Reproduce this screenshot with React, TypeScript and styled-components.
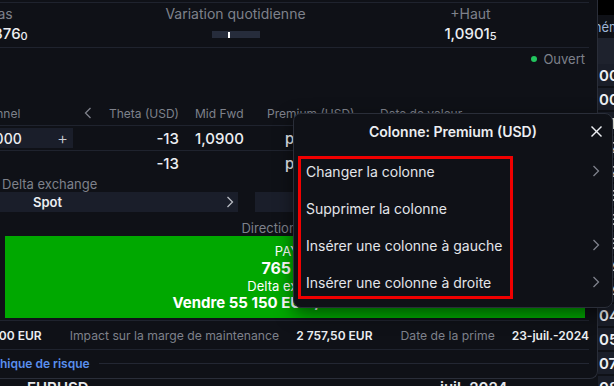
import React from "react";
import styled, { createGlobalStyle } from "styled-components";

const Global = createGlobalStyle`
  html, body { margin: 0; padding: 0; background: #0f1117; }
  body { font-family: Inter, "Noto Sans", sans-serif; }
  * { box-sizing: border-box; }
`;

const Screen = styled.div`
  position: relative;
  width: 614px;
  height: 386px;
  overflow: hidden;
  background: #0f1117;
  color: #e6e8ec;
  font-family: Inter, "Noto Sans", sans-serif;
`;

/* ---------- background page (behind the panel) ---------- */
const BgPage = styled.div`
  display: flex;
  flex-direction: column;
`;
const BgTopBar = styled.div`
  height: 15px;
  background: #000;
`;
const BgToolbar = styled.div`
  height: 23px;
  display: flex;
  align-items: center;
  padding-left: 578px;
  font-size: 13px;
  color: #9fb6d6;
  white-space: nowrap;
`;
const BgHeader = styled.div`
  height: 26px;
  background: #1e222d;
`;
const BgRow = styled.div`
  height: 24px;
  display: grid;
  grid-template-columns: 413px 158px 1fr;
  padding-left: 27px;
  align-items: center;
  border-bottom: 2px solid #0f1117;
  font-size: 15px;
  font-weight: 600;
  white-space: nowrap;
`;
const BgValue = styled.div`
  height: 100%;
  display: flex;
  align-items: center;
  padding-left: 1px;
  background: #1a1e29;
  color: #eef0f3;
`;

/* ---------- main panel ---------- */
const Panel = styled.div`
  position: absolute;
  left: 0;
  top: 0;
  width: 598px;
  height: 379px;
  background: #0f1117;
  border-right: 1px solid #2a2e39;
  border-bottom: 1px solid #2a2e39;
  border-bottom-right-radius: 8px;
  padding-right: 8px;
  overflow: hidden;
  display: flex;
  flex-direction: column;
`;

const StatsSection = styled.div`
  margin-top: 2px;
  border-top: 1px solid #1f232e;
  border-bottom: 1px solid #1f232e;
  padding: 1px 0 3px;
`;
const StatsGrid = styled.div`
  display: grid;
  grid-template-columns: repeat(3, 235px);
  margin-left: -117px;
`;
const Stat = styled.div`
  display: flex;
  flex-direction: column;
  align-items: center;
  white-space: nowrap;
`;
const StatLabel = styled.div`
  font-size: 14px;
  line-height: 20px;
  color: #7e818b;
`;
const StatValue = styled.div`
  font-size: 15px;
  line-height: 20px;
  font-weight: 500;
  color: #eceef2;
  height: 20px;
  display: flex;
  align-items: center;
`;
const Small = styled.span`
  font-size: 11px;
  margin-top: 3px;
`;
const RangeBar = styled.div`
  position: relative;
  width: 48px;
  height: 7px;
  background: #262c3b;
`;
const RangeTick = styled.div`
  position: absolute;
  left: 16px;
  top: 1px;
  width: 2px;
  height: 6px;
  background: #fff;
`;

const StatusRow = styled.div`
  height: 22px;
  display: flex;
  align-items: center;
  justify-content: flex-end;
  gap: 6px;
  padding-right: 4px;
  font-size: 13px;
  color: #7e818b;
`;
const Dot = styled.span`
  width: 6px;
  height: 6px;
  border-radius: 50%;
  background: #22c55e;
`;

const Table = styled.div`
  margin-top: 31px;
  margin-left: -34px;
  display: flex;
  flex-direction: column;
`;
const TRow = styled.div<{ $head?: boolean; $line?: boolean }>`
  display: grid;
  grid-template-columns: 107px 30px 76px 88px 113px 160px;
  height: ${(p) => (p.$line ? 25 : 24)}px;
  align-items: center;
  border-bottom: ${(p) => (p.$line ? "1px solid #1f232e" : "none")};
  font-size: ${(p) => (p.$head ? 12 : 15)}px;
  font-weight: ${(p) => (p.$head ? 400 : 500)};
  color: ${(p) => (p.$head ? "#7e818b" : "#eceef2")};
  white-space: nowrap;
`;
const Cell = styled.div<{ $align?: string; $pl?: number }>`
  padding-left: ${(p) => p.$pl || 0}px;
  display: flex;
  justify-content: ${(p) =>
    p.$align === "right" ? "flex-end" : p.$align === "center" ? "center" : "flex-start"};
  align-items: center;
  overflow: hidden;
`;
const NumInput = styled.div`
  width: 107px;
  height: 20px;
  background: #1a1e2a;
  display: flex;
  align-items: center;
  justify-content: space-between;
  padding: 0 5px 0 1px;
  font-size: 14px;
`;
const Plus = styled.span`
  font-size: 17px;
  font-weight: 300;
  color: #c9ccd3;
`;

const DeltaGrid = styled.div`
  display: grid;
  grid-template-columns: 238px 238px;
  column-gap: 17px;
`;
const Field = styled.div`
  display: flex;
  flex-direction: column;
`;
const FieldLabel = styled.div`
  height: 17px;
  font-size: 13px;
  line-height: 19px;
  color: #7e818b;
  padding-left: 2px;
  white-space: nowrap;
`;
const SelectBox = styled.div<{ $center?: boolean }>`
  height: 20px;
  background: #1a1e2a;
  display: flex;
  align-items: center;
  justify-content: ${(p) => (p.$center ? "center" : "space-between")};
  padding: 0 4px 0 33px;
  font-size: 13px;
  font-weight: 600;
  color: #eceef2;
`;

const DirectionLabel = styled.div`
  margin-top: 8px;
  height: 16px;
  line-height: 16px;
  text-align: center;
  font-size: 13px;
  color: #7e818b;
  padding-left: 4px;
`;
const GreenBlock = styled.div`
  height: 82px;
  margin: 0 4px 0 5px;
  background: #00a800;
  color: #fff;
  display: flex;
  flex-direction: column;
  align-items: center;
  justify-content: center;
  white-space: nowrap;
`;
const GLine = styled.div<{ $size: number; $bold?: boolean; $lh: number }>`
  font-size: ${(p) => p.$size}px;
  line-height: ${(p) => p.$lh}px;
  font-weight: ${(p) => (p.$bold ? 700 : 400)};
`;

const InfoRow = styled.div`
  margin-top: 2px;
  height: 30px;
  border-top: 1px solid #1f232e;
  border-bottom: 1px solid #1f232e;
  display: flex;
  justify-content: flex-end;
  align-items: center;
  gap: 28px;
  white-space: nowrap;
`;
const Pair = styled.div`
  display: flex;
  align-items: baseline;
  gap: 17px;
  flex-shrink: 0;
`;
const PLabel = styled.span`
  color: #7e818b;
  font-size: 12.2px;
`;
const PValue = styled.span`
  color: #eceef2;
  font-weight: 600;
  font-size: 12px;
`;

const RiskRow = styled.div`
  height: 26px;
  display: flex;
  align-items: center;
  gap: 9px;
  margin-left: -28px;
`;
const RiskLink = styled.span`
  color: #5a8fee;
  font-size: 12px;
  font-weight: 600;
  white-space: nowrap;
`;
const RiskLine = styled.div`
  flex: 1;
  height: 1px;
  background: #232733;
`;

/* ---------- column popup ---------- */
const Popup = styled.div`
  position: absolute;
  left: 293px;
  top: 113px;
  width: 320px;
  height: 195px;
  background: #0f1117;
  border: 1px solid #2a2e39;
  border-radius: 8px;
  box-shadow: 0 6px 18px rgba(0, 0, 0, 0.5);
`;
const PopupHeader = styled.div`
  height: 34px;
  display: grid;
  grid-template-columns: 40px 1fr 40px;
  align-items: center;
`;
const PopupTitle = styled.div`
  text-align: center;
  font-size: 14px;
  font-weight: 600;
  color: #eceef2;
  white-space: nowrap;
`;
const CloseBtn = styled.div`
  justify-self: end;
  padding-right: 10px;
  display: flex;
  align-items: center;
`;
const MenuList = styled.div`
  padding-top: 4.5px;
  display: flex;
  flex-direction: column;
`;
const MenuItem = styled.div`
  height: 37px;
  display: flex;
  align-items: center;
  justify-content: space-between;
  padding: 0 12px 0 12px;
  font-size: 14px;
  color: #e3e5ea;
  white-space: nowrap;
`;
const Highlight = styled.div`
  position: absolute;
  left: 4px;
  top: 42px;
  width: 215px;
  height: 143px;
  border: 3px solid #f00000;
  pointer-events: none;
`;

const Chevron = ({ dir = "right", color = "#7e818b" }: { dir?: "left" | "right"; color?: string }) => (
  <svg width="8" height="12" viewBox="0 0 8 12" fill="none">
    <polyline
      points={dir === "right" ? "1.5,1 6.5,6 1.5,11" : "6.5,1 1.5,6 6.5,11"}
      stroke={color}
      strokeWidth="1.3"
      fill="none"
    />
  </svg>
);

const CloseIcon = () => (
  <svg width="11" height="11" viewBox="0 0 11 11">
    <line x1="0.5" y1="0.5" x2="10.5" y2="10.5" stroke="#eceef2" strokeWidth="1.4" />
    <line x1="10.5" y1="0.5" x2="0.5" y2="10.5" stroke="#eceef2" strokeWidth="1.4" />
  </svg>
);

const bgRows = ["00", "00", "01", "02", "02", "03", "03", "03", "04", "04", "04", "05", "07", "08"];

export default function App() {
  return (
    <Screen>
      <Global />
      <BgPage>
        <BgTopBar />
        <BgToolbar>Schéma</BgToolbar>
        <BgHeader />
        {bgRows.map((v, i) => (
          <BgRow key={i}>
            <span>EURUSD</span>
            <span>juil. 2024</span>
            <BgValue>{v},5</BgValue>
          </BgRow>
        ))}
      </BgPage>

      <Panel>
        <StatsSection>
          <StatsGrid>
            <Stat>
              <StatLabel>Bas</StatLabel>
              <StatValue>
                1,0876<Small>0</Small>
              </StatValue>
            </Stat>
            <Stat>
              <StatLabel>Variation quotidienne</StatLabel>
              <StatValue>
                <RangeBar>
                  <RangeTick />
                </RangeBar>
              </StatValue>
            </Stat>
            <Stat>
              <StatLabel>+Haut</StatLabel>
              <StatValue>
                1,0901<Small>5</Small>
              </StatValue>
            </Stat>
          </StatsGrid>
        </StatsSection>

        <StatusRow>
          <Dot />
          Ouvert
        </StatusRow>

        <Table>
          <TRow $head $line>
            <Cell>Notionnel</Cell>
            <Cell $align="center">
              <Chevron dir="left" />
            </Cell>
            <Cell $align="right">Theta (USD)</Cell>
            <Cell $pl={16}>Mid Fwd</Cell>
            <Cell>Premium (USD)</Cell>
            <Cell>Date de valeur</Cell>
          </TRow>
          <TRow $line>
            <Cell>
              <NumInput>
                100 000
                <Plus>+</Plus>
              </NumInput>
            </Cell>
            <Cell />
            <Cell $align="right">-13</Cell>
            <Cell $pl={16}>1,0900</Cell>
            <Cell $pl={18}>payé</Cell>
            <Cell>25-juil.-2024</Cell>
          </TRow>
          <TRow>
            <Cell />
            <Cell />
            <Cell $align="right">-13</Cell>
            <Cell $pl={16} />
            <Cell $pl={18}>payé</Cell>
            <Cell />
          </TRow>
        </Table>

        <DeltaGrid>
          <Field>
            <FieldLabel>Delta exchange</FieldLabel>
            <SelectBox>
              Spot
              <Chevron color="#b9bcc4" />
            </SelectBox>
          </Field>
          <Field>
            <FieldLabel>&nbsp;</FieldLabel>
            <SelectBox $center>1,0900</SelectBox>
          </Field>
        </DeltaGrid>

        <DirectionLabel>Direction du trade</DirectionLabel>
        <GreenBlock>
          <GLine $size={13} $lh={16}>PAYER</GLine>
          <GLine $size={16} $lh={19} $bold>
            765 USD
          </GLine>
          <GLine $size={13} $lh={16}>Delta exchange</GLine>
          <GLine $size={15} $lh={18} $bold>
            Vendre 55 150 EUR / Acheter USD
          </GLine>
        </GreenBlock>

        <InfoRow>
          <Pair>
            <PLabel>Prime</PLabel>
            <PValue>2 760,00 EUR</PValue>
          </Pair>
          <Pair>
            <PLabel>Impact sur la marge de maintenance</PLabel>
            <PValue>2 757,50 EUR</PValue>
          </Pair>
          <Pair>
            <PLabel>Date de la prime</PLabel>
            <PValue>23-juil.-2024</PValue>
          </Pair>
        </InfoRow>

        <RiskRow>
          <RiskLink>Graphique de risque</RiskLink>
          <RiskLine />
        </RiskRow>
      </Panel>

      <Popup>
        <PopupHeader>
          <span />
          <PopupTitle>Colonne: Premium (USD)</PopupTitle>
          <CloseBtn>
            <CloseIcon />
          </CloseBtn>
        </PopupHeader>
        <MenuList>
          <MenuItem>
            Changer la colonne
            <Chevron />
          </MenuItem>
          <MenuItem>Supprimer la colonne</MenuItem>
          <MenuItem>
            Insérer une colonne à gauche
            <Chevron />
          </MenuItem>
          <MenuItem>
            Insérer une colonne à droite
            <Chevron />
          </MenuItem>
        </MenuList>
        <Highlight />
      </Popup>
    </Screen>
  );
}
